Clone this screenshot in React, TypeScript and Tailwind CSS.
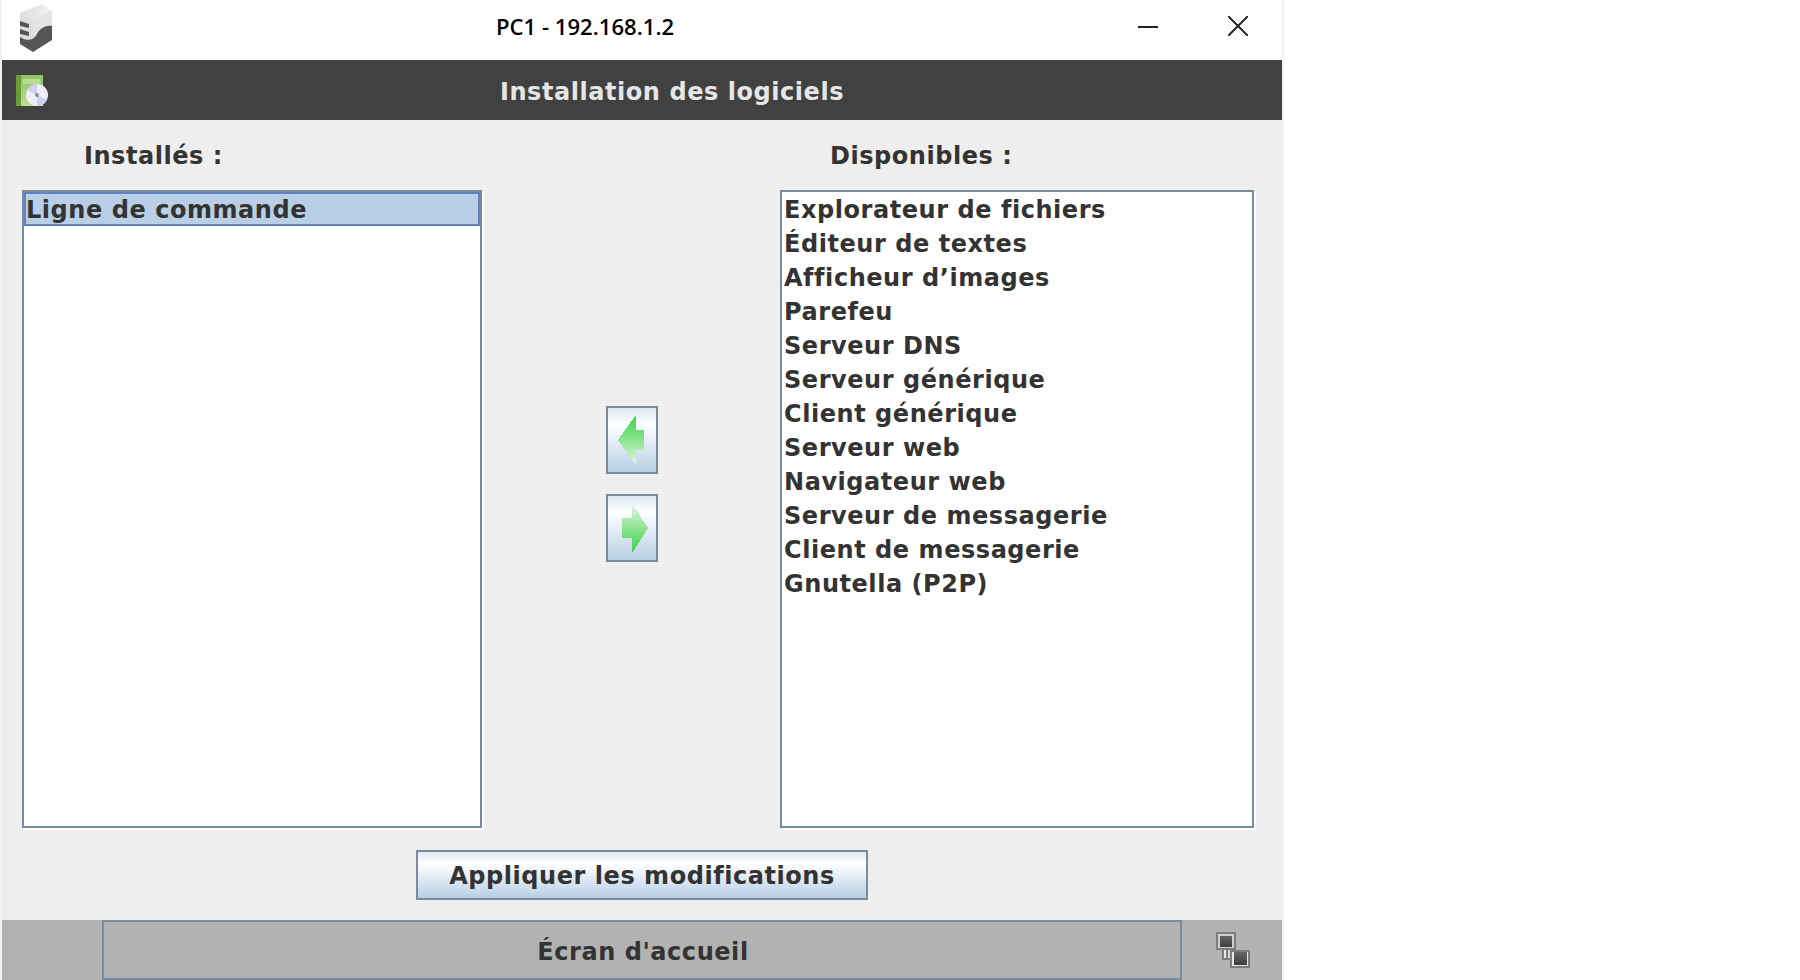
import React from "react";
import { useId } from "react";

const installed = ["Ligne de commande"];

const available = [
  "Explorateur de fichiers",
  "Éditeur de textes",
  "Afficheur d’images",
  "Parefeu",
  "Serveur DNS",
  "Serveur générique",
  "Client générique",
  "Serveur web",
  "Navigateur web",
  "Serveur de messagerie",
  "Client de messagerie",
  "Gnutella (P2P)",
];

const ServerIcon = () => (
  <svg width="32" height="48" viewBox="0 0 32 48">
    <defs>
      <linearGradient id="srvTop" x1="0" y1="0" x2="1" y2="0">
        <stop offset="0" stopColor="#dcdcdc" />
        <stop offset="1" stopColor="#f2f2f2" />
      </linearGradient>
    </defs>
    <path d="M0 9 L22 0 L32 6 L13 16 Z" fill="url(#srvTop)" />
    <path d="M0 9 L13 16 L13 48 L0 40 Z" fill="#dedede" />
    <path d="M13 16 L32 6 L32 36 L13 48 Z" fill="#e4e4e4" />
    <path d="M0 17 L9 20 L9 24 L0 22 Z" fill="#555" />
    <path d="M0 25 L9 28 L9 32 L0 30 Z" fill="#555" />
    <path d="M0 33 C8 38 14 36 17 30 C20 24 26 21 32 22 L32 36 L13 48 L0 40 Z" fill="#565656" />
  </svg>
);

const InstallIcon = () => (
  <svg width="32" height="32" viewBox="0 0 32 32">
    <defs>
      <linearGradient id="boxFill" x1="0" y1="0" x2="0" y2="1">
        <stop offset="0" stopColor="#8fc45f" />
        <stop offset="1" stopColor="#bcdc92" />
      </linearGradient>
    </defs>
    <rect x="0" y="0" width="27" height="31" fill="url(#boxFill)" />
    <rect x="0" y="0" width="5" height="31" fill="#6b9c3a" />
    <rect x="7" y="4" width="17" height="5" fill="#b9dc94" />
    <circle cx="21" cy="20" r="11" fill="#eeeef8" />
    <path d="M21 20 L11 15 A11 11 0 0 1 21 9 Z" fill="#cfcff0" />
    <path d="M21 20 L31 25 A11 11 0 0 1 21 31 Z" fill="#cfcff0" />
    <circle cx="21" cy="20" r="2" fill="#8d8d8d" />
  </svg>
);

const MonitorsIcon = () => (
  <svg width="34" height="36" viewBox="0 0 34 36" shapeRendering="crispEdges">
    <defs>
      <linearGradient id="scr" x1="0" y1="0" x2="0" y2="1">
        <stop offset="0" stopColor="#666" />
        <stop offset="1" stopColor="#3e3e3e" />
      </linearGradient>
    </defs>
    <rect x="6" y="17" width="10" height="11" fill="#7d7d7d" />
    <rect x="8" y="17" width="2" height="9" fill="#e8e8e8" />
    <rect x="12" y="17" width="2" height="9" fill="#d8d8d8" />
    <rect x="0" y="0" width="20" height="18" fill="#7d7d7d" />
    <rect x="2" y="2" width="16" height="14" fill="#cfcfcf" />
    <rect x="4" y="4" width="12" height="11" fill="url(#scr)" />
    <rect x="14" y="18" width="20" height="18" fill="#7d7d7d" />
    <rect x="16" y="20" width="16" height="14" fill="#e8e8e8" />
    <rect x="18" y="20" width="13" height="13" fill="url(#scr)" />
  </svg>
);

const Arrow = ({ points, strongTop }: { points: string; strongTop: boolean }) => {
  const id = useId();
  return (
    <svg width="48" height="64" viewBox="0 0 48 64" shapeRendering="crispEdges">
      <defs>
        <linearGradient id={id} x1="0" y1="0" x2="0" y2="1">
          <stop offset="0" stopColor={strongTop ? "#3fd24a" : "#dff6df"} />
          <stop offset="0.5" stopColor="#8ce48f" />
          <stop offset="1" stopColor={strongTop ? "#dff6df" : "#3fd24a"} />
        </linearGradient>
      </defs>
      <polygon points={points} fill={`url(#${id})`} />
    </svg>
  );
};

const SoftwareList = ({
  items,
  selected,
  width,
}: {
  items: string[];
  selected?: string;
  width: string;
}) => (
  <ul className={`${width} h-[638px] border-2 border-[#7a8a9f] bg-white shadow-[2px_2px_0_#ffffff] overflow-hidden`}>
    {items.map((item) => (
      <li
        key={item}
        className={
          item === selected
            ? "h-[34px] bg-[#b8cfe5] border-2 border-[#6382bf] leading-[32px]"
            : "h-[34px] border-2 border-transparent leading-[32px]"
        }
      >
        {item}
      </li>
    ))}
  </ul>
);

const ArrowButton = ({ children }: { children: React.ReactNode }) => (
  <button className="w-[52px] h-[68px] border-2 border-[#7a8a9f] bg-gradient-to-b from-[#dde8f3] via-white via-[25%] to-[#b8cfe5] flex items-center justify-center">
    {children}
  </button>
);

export default function App() {
  return (
    <div className="w-[1800px] h-[980px] bg-white overflow-hidden font-['DejaVu_Sans',sans-serif] font-bold text-[#333333] text-[24px] tracking-[0.55px]">
      <div className="w-[1284px] h-full pl-[2px] pr-[2px] bg-[#f2f2f2] flex flex-col">
        {/* barre de titre */}
        <header className="h-[60px] bg-white flex items-center relative shrink-0">
          <div className="pl-[18px] mb-[4px]">
            <ServerIcon />
          </div>
          <span className="absolute left-[494px] top-[12px] font-['Open_Sans',sans-serif] font-semibold text-[22px] leading-[28px] tracking-[0.05px] text-black">
            PC1 - 192.168.1.2
          </span>
          <div className="ml-auto flex items-center mb-[8px]">
            <div className="w-[20px] h-[2px] bg-[#222222] mr-[70px] mt-[2px]" />
            <svg width="20" height="20" viewBox="0 0 20 20" className="mr-[34px]" shapeRendering="crispEdges">
              <path d="M0 0 L20 20 M20 0 L0 20" stroke="#333" strokeWidth="1.5" />
            </svg>
          </div>
        </header>

        <div className="h-[60px] bg-[#414141] flex items-center relative shrink-0">
          <div className="pl-[14px] pt-[1px]">
            <InstallIcon />
          </div>
          <span className="absolute left-[498px] top-[14px] text-[#e6e6e6] leading-[36px]">
            Installation des logiciels
          </span>
        </div>

        {/* contenu */}
        <main className="h-[800px] bg-[#eeeeee] flex flex-col">
          <div className="flex h-[70px] pt-[2px] items-center">
            <span className="ml-[82px] w-[746px]">Installés :</span>
            <span>Disponibles :</span>
          </div>
          <div className="flex pl-[20px]">
            <SoftwareList items={installed} selected="Ligne de commande" width="w-[460px]" />
            <div className="w-[298px] pl-[2px] flex flex-col items-center gap-[20px] pt-[216px]">
              <ArrowButton>
                <Arrow strongTop points="10,32 27,8 28,8 28,22 36,22 36,42 28,42 28,56 27,56" />
              </ArrowButton>
              <ArrowButton>
                <Arrow strongTop={false} points="14,22 24,22 24,9 25,9 40,32 25,56 24,56 24,42 14,42" />
              </ArrowButton>
            </div>
            <SoftwareList items={available} width="w-[474px]" />
          </div>
          <div className="flex pl-[414px] pt-[22px]">
            <button className="w-[452px] h-[50px] pt-[2px] border-2 border-[#7a8a9f] bg-gradient-to-b from-[#dde8f3] via-white via-[25%] to-[#b8cfe5] leading-[44px]">
              Appliquer les modifications
            </button>
          </div>
        </main>

        {/* barre du bas */}
        <footer className="h-[60px] bg-[#b2b2b2] flex items-center shrink-0">
          <div className="ml-[100px] w-[1080px] h-[60px] pt-[4px] pl-[2px] border-2 border-[#7a8a9f] flex items-center justify-center">
            Écran d'accueil
          </div>
          <div className="ml-[34px]">
            <MonitorsIcon />
          </div>
        </footer>
      </div>
    </div>
  );
}
